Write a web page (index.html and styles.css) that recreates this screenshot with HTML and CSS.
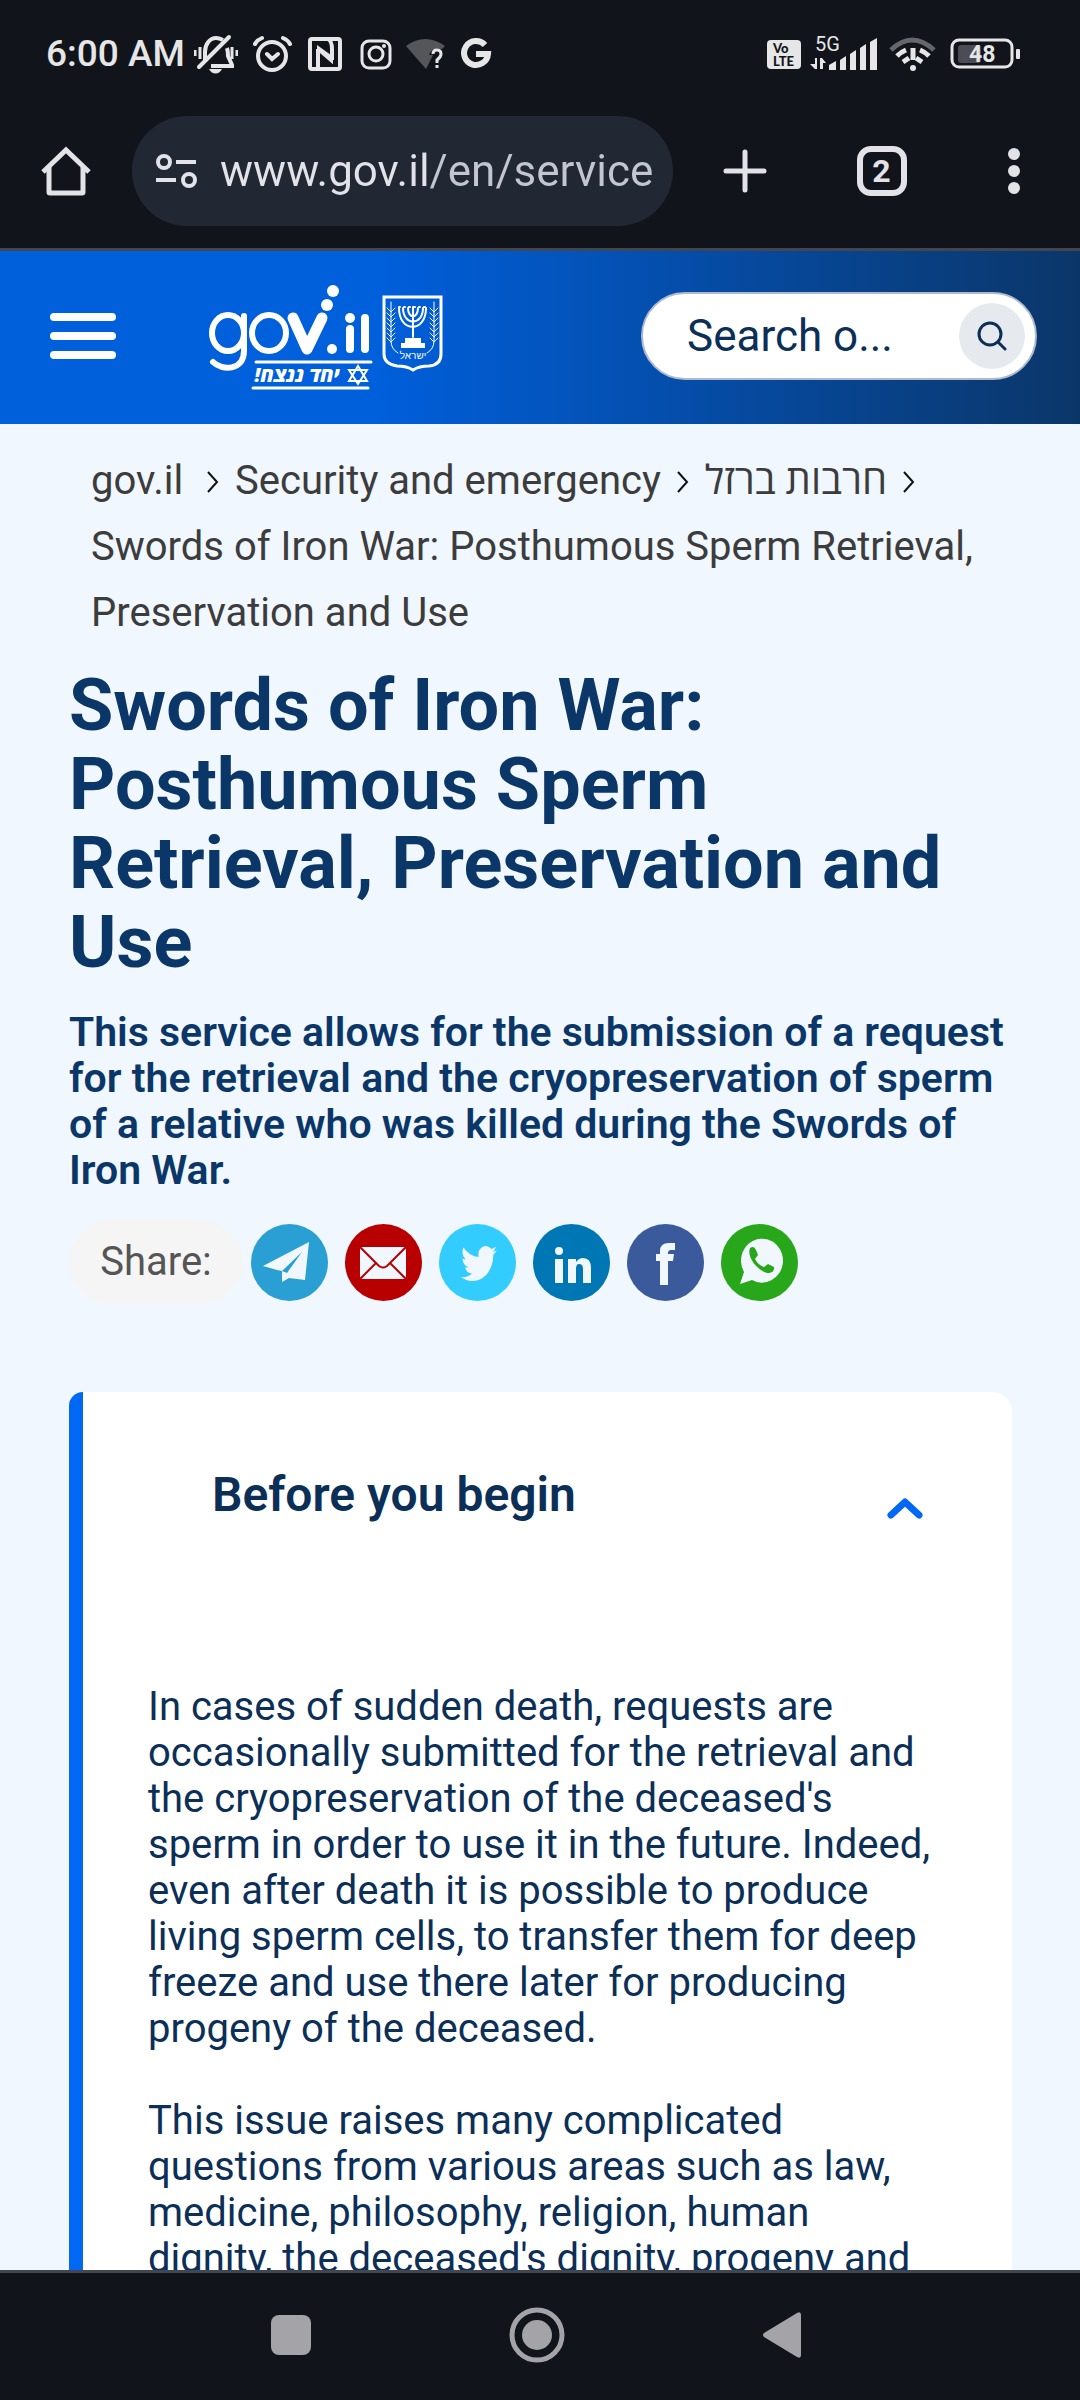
FILE: index.html
```html
<!DOCTYPE html>
<html lang="en">
<head>
  <meta charset="utf-8">
  <meta name="viewport" content="width=device-width, initial-scale=1.0">
  <title>Swords of Iron War: Posthumous Sperm Retrieval, Preservation and Use</title>
  <link rel="stylesheet" href="styles.css">
</head>
<body>

  <!-- Phone status bar -->
  <div class="status-bar">
    <div class="status-left">
      <span class="clock">6:00 AM</span>
      <svg width="44" height="40" viewBox="194 34 44 40" fill="none" stroke="#e6e6e6" stroke-width="4">
        <path d="M205 60V52c0-8 5-14 11-14 3 0 5 1 7 2M227 48c1 3 1 5 1 8l4 9v1h-21" />
        <path d="M199 67l30-30" stroke-linecap="round" />
        <path d="M195 50v6M200 47v12M232 47v12M237 50v6" stroke-width="3" />
        <path d="M209 69h13c-3 6-10 6-13 0z" fill="#e6e6e6" stroke="none" />
      </svg>
      <svg width="42" height="40" viewBox="252 34 42 40" fill="none" stroke="#e6e6e6" stroke-width="4" stroke-linecap="round">
        <circle cx="272" cy="56" r="14" />
        <path d="M255 44q2-4 7-6M290 44q-2-4-7-6M267 54l5 5 6-5" />
      </svg>
      <svg width="36" height="40" viewBox="308 34 36 40" fill="none" stroke="#e6e6e6" stroke-width="4">
        <rect x="310" y="39" width="30" height="30" rx="2" />
        <path d="M318 69V49M332 60V49q0-8-4-10" />
        <path d="M318 50v-3l14 10v5z" fill="#e6e6e6" stroke-width="2" />
      </svg>
      <svg width="34" height="40" viewBox="358 34 34 40" fill="none" stroke="#e6e6e6" stroke-width="3">
        <rect x="362" y="41" width="28" height="27" rx="7" />
        <circle cx="376" cy="54" r="7" />
        <circle cx="384" cy="46" r="2" fill="#e6e6e6" stroke="none" />
      </svg>
      <svg width="40" height="40" viewBox="406 34 40 40">
        <path d="M406 46q19-14 39 0l-3 3q-10-2-13 6h4l-7 14z" fill="#55565a" />
        <path d="M433 54q0-4 4-4t4 4q0 3-4 6v3M437 65v3" fill="none" stroke="#e6e6e6" stroke-width="3" />
      </svg>
      <svg width="32" height="40" viewBox="460 34 32 40" fill="none" stroke="#e6e6e6" stroke-width="6">
        <path d="M485 45a12 12 0 1 0 3 9h-12" />
      </svg>
    </div>
    <div class="status-right">
      <svg width="36" height="40" viewBox="766 34 36 40">
        <rect x="767" y="40" width="34" height="29" rx="4" fill="#e6e6e6" />
        <text class="volte"><tspan x="773" y="53">Vo</tspan><tspan x="773" y="66">LTE</tspan></text>
      </svg>
      <svg width="70" height="48" viewBox="810 30 70 48" fill="#e6e6e6">
        <text class="network" x="815" y="51">5G</text>
        <path d="M815 58h2v11h-2l-5-5h5zM820 69V58h2l4 5h-3v6z" />
        <path d="M829 70v-5l7-4v9zM840 70V60l6-4v14zM850 70V54l6-4v20zM860 70V48l6-4v26zM870 70V42l7-4v32z" />
      </svg>
      <svg width="50" height="40" viewBox="888 34 50 40" fill="none" stroke="#e6e6e6" stroke-width="5">
        <path d="M891 50q21-20 43 0" stroke="#66676b" />
        <path d="M897 56q4-4 9-6M929 56q-4-4-9-6M903 62l6-4M922 62l-6-4" />
        <path d="M913 48v12" />
        <circle cx="913" cy="68" r="3" fill="#e6e6e6" stroke="none" />
      </svg>
      <svg width="76" height="40" viewBox="946 34 76 40">
        <rect x="952" y="40" width="60" height="27" rx="7" fill="none" stroke="#e6e6e6" stroke-width="3" />
        <rect x="958" y="45" width="23" height="18" rx="3" fill="#4c4d54" />
        <rect x="1016" y="49" width="4" height="10" rx="1" fill="#e6e6e6" />
        <text class="charge" x="969" y="62">48</text>
      </svg>
    </div>
  </div>

  <!-- Browser toolbar -->
  <div class="toolbar">
    <button class="tool" type="button" aria-label="Home">
      <svg width="50" height="50" viewBox="0 0 50 50" fill="none" stroke="#e3e2e9" stroke-width="5">
        <path d="M2 26L25 4l23 22" />
        <path d="M8 21v25q0 1 1 1h32q1 0 1-1V21" />
      </svg>
    </button>
    <div class="address">
      <svg width="42" height="36" viewBox="0 0 42 36" fill="none" stroke="#e3e2e9" stroke-width="4">
        <circle cx="9" cy="9" r="6" />
        <circle cx="34" cy="27" r="6" />
        <path d="M21 9h20M1 27h20" />
      </svg>
      <input type="text" aria-label="Address" value="www.gov.il/en/service">
    </div>
    <div class="tools">
      <button class="tool" type="button" aria-label="New tab">
        <svg width="44" height="44" viewBox="0 0 44 44" fill="none" stroke="#e3e2e9" stroke-width="5" stroke-linecap="round">
          <path d="M22 3v38M3 22h38" />
        </svg>
      </button>
      <button class="tool tabs" type="button" aria-label="Open tabs">2</button>
      <button class="tool" type="button" aria-label="Menu">
        <svg width="12" height="46" viewBox="0 0 12 46" fill="#e3e2e9">
          <circle cx="6" cy="6" r="6" /><circle cx="6" cy="23" r="6" /><circle cx="6" cy="40" r="6" />
        </svg>
      </button>
    </div>
  </div>

  <!-- Site header -->
  <header class="header">
    <button class="hamburger" type="button" aria-label="Menu">
      <span></span><span></span><span></span>
    </button>
    <a class="logo" href="#" aria-label="gov.il">
      <svg width="236" height="112" viewBox="208 281 236 112" fill="none" stroke="#fff" stroke-linecap="round">
        <g stroke-width="6">
          <ellipse cx="228" cy="332" rx="16" ry="18" />
          <path d="M244 315v35c0 20-22 20-31 11" />
          <ellipse cx="269" cy="332" rx="17" ry="18" />
        </g>
        <path d="M293 317l14 31 15-31" stroke-width="11" stroke-linejoin="round" />
        <g fill="#fff" stroke="none">
          <circle cx="327" cy="304" r="6" /><circle cx="333" cy="290" r="6" />
          <circle cx="332" cy="348" r="5" /><circle cx="350" cy="317" r="5" />
        </g>
        <path d="M350 328v20M365 317v31" stroke-width="8" />
        <path d="M256 361h115M253 387h115" stroke-width="3" />
        <path d="M358 365l9 15h-18zM358 383l-9-14h18z" stroke-width="2" />
        <text class="slogan" x="297" y="381">יחד ננצח!</text>
        <!-- State emblem -->
        <path d="M384 296h57v57q0 11-12 12-10 0-16 4-6-4-16-4-13-2-13-12z" stroke-width="3" />
        <g stroke-width="2">
          <path d="M399 307c0 25 27 25 27 0M403 307c0 18 20 18 20 0M408 307c0 11 10 11 10 0M413 306v30" />
          <path d="M399 306h27" stroke-dasharray="1 4" />
        </g>
        <g stroke-width="1">
          <path d="M391 301v39q0 8 7 12M434 301v39q0 8-7 12" />
          <path d="M387 307l4 4 4-4M387 312l4 4 4-4M387 317l4 4 4-4M387 322l4 4 4-4M387 327l4 4 4-4M387 332l4 4 4-4M387 337l4 4 4-4M430 307l4 4 4-4M430 312l4 4 4-4M430 317l4 4 4-4M430 322l4 4 4-4M430 327l4 4 4-4M430 332l4 4 4-4M430 337l4 4 4-4" />
        </g>
        <path d="M405 337h16v5h4v5h-24v-5h4z" fill="#fff" stroke="none" />
        <text class="emblem-name" x="413" y="358">ישראל</text>
      </svg>
    </a>
    <form class="search">
      <input type="text" aria-label="Search" placeholder="Search o...">
      <button type="button" aria-label="Search">
        <svg width="30" height="30" viewBox="0 0 30 30" fill="none" stroke="#0c2f57" stroke-width="3" stroke-linecap="round">
          <circle cx="13" cy="13" r="11" />
          <path d="M21 21l7 7" />
        </svg>
      </button>
    </form>
  </header>

  <main class="page">
    <nav class="breadcrumb" aria-label="Breadcrumb">
      <a class="home" href="#">gov.il</a>
      <svg width="14" height="24" viewBox="0 0 14 24"><path d="M2 2l9 10-9 10" /></svg>
      <a href="#">Security and emergency</a>
      <svg width="14" height="24" viewBox="0 0 14 24"><path d="M2 2l9 10-9 10" /></svg>
      <a href="#" lang="he">חרבות ברזל</a>
      <svg width="14" height="24" viewBox="0 0 14 24"><path d="M2 2l9 10-9 10" /></svg>
      <span>Swords of Iron War: Posthumous Sperm Retrieval, Preservation and Use</span>
    </nav>

    <h1>Swords of Iron War: Posthumous Sperm Retrieval, Preservation and Use</h1>
    <p class="intro">This service allows for the submission of a request for the retrieval and the cryopreservation of sperm of a relative who was killed during the Swords of Iron War.</p>

    <div class="share">
      <span class="share-label">Share:</span>
      <a class="telegram" href="#" aria-label="Telegram">
        <svg viewBox="0 0 77 77"><path d="M12 42l46-24-4 38-16-2-7 4V47l-5-1zM31 47l20-19-15 21z" fill="#f0f7ff" fill-rule="evenodd" /></svg>
      </a>
      <a class="mail" href="#" aria-label="Email">
        <svg viewBox="0 0 77 77"><path d="M15 23h46v32H15z" fill="#f0f7ff" /><path d="M15 23l19 19q4 3 8 0l19-19M15 55l16-16M61 55L45 39" fill="none" stroke="#b80000" stroke-width="2" /></svg>
      </a>
      <a class="twitter" href="#" aria-label="Twitter">
        <svg viewBox="0 0 77 77"><path transform="translate(22 18) scale(1.5 1.8)" d="M23.9 4.6a10 10 0 0 1-2.8.8 4.9 4.9 0 0 0 2.2-2.7c-1 .6-2 1-3.1 1.2a4.9 4.9 0 0 0-8.4 4.5A14 14 0 0 1 1.7 3.1a4.9 4.9 0 0 0 1.5 6.6 4.9 4.9 0 0 1-2.2-.6 4.9 4.9 0 0 0 3.9 4.9 5 5 0 0 1-2.2.1 4.9 4.9 0 0 0 4.6 3.4A9.9 9.9 0 0 1 0 19.5a14 14 0 0 0 7.5 2.2c9.1 0 14.3-7.7 14-14.6a10 10 0 0 0 2.4-2.5z" fill="#f0f7ff" /></svg>
      </a>
      <a class="linkedin" href="#" aria-label="LinkedIn">
        <svg viewBox="0 0 77 77"><path d="M22 35h8v24h-8zM35 35h8v3q3-4 7-4 8 0 8 10v15h-8V45q0-5-4-5-3 0-3 5v14h-8z" fill="#f0f7ff" /><circle cx="26" cy="27" r="4" fill="#f0f7ff" /></svg>
      </a>
      <a class="facebook" href="#" aria-label="Facebook">
        <svg viewBox="0 0 77 77"><path d="M33 61V37h-4v-7h4v-3q0-8 9-8h6v7h-4q-3 0-3 3v1h6l-1 7h-5v24z" fill="#f0f7ff" /></svg>
      </a>
      <a class="whatsapp" href="#" aria-label="WhatsApp">
        <svg viewBox="0 0 77 77"><path d="M19 60l4-12a21 22 0 1 1 8 8z" fill="#f0f7ff" /><path d="M29 24q4-3 6 2l2 5-3 4q3 6 9 8l4-3 6 3q1 5-5 6c-9 0-23-15-19-25z" fill="#29a71a" /></svg>
      </a>
    </div>

    <section class="card">
      <div class="card-head">
        <h2>Before you begin</h2>
        <button type="button" aria-label="Collapse" aria-expanded="true">
          <svg width="38" height="22" viewBox="0 0 38 22" fill="none" stroke="#0068f5" stroke-width="7" stroke-linecap="round" stroke-linejoin="round">
            <path d="M5 17L19 4l14 13" />
          </svg>
        </button>
      </div>
      <p>In cases of sudden death, requests are occasionally submitted for the retrieval and the cryopreservation of the deceased's sperm in order to use it in the future. Indeed, even after death it is possible to produce living sperm cells, to transfer them for deep freeze and use there later for producing progeny of the deceased.</p>
      <p>This issue raises many complicated questions from various areas such as law, medicine, philosophy, religion, human dignity, the deceased's dignity, progeny and</p>
    </section>
  </main>

  <!-- Phone navigation -->
  <div class="nav-bar">
    <button type="button" aria-label="Recent apps">
      <svg width="56" height="56" viewBox="0 0 56 56" fill="#a3a3a8"><rect x="8" y="8" width="40" height="40" rx="8" /></svg>
    </button>
    <button type="button" aria-label="Home">
      <svg width="56" height="56" viewBox="0 0 56 56"><circle cx="28" cy="28" r="25" fill="none" stroke="#a3a3a8" stroke-width="5" /><circle cx="28" cy="28" r="15" fill="#a3a3a8" /></svg>
    </button>
    <button type="button" aria-label="Back">
      <svg width="56" height="56" viewBox="0 0 56 56" fill="#a3a3a8"><path d="M9 26q-2 2 0 4l33 20q4 2 4-2V8q0-4-4-2z" /></svg>
    </button>
  </div>

</body>
</html>
```
FILE: styles.css
```css
* {
  box-sizing: border-box;
}

body {
  margin: 0;
  height: 100vh;
  display: flex;
  flex-direction: column;
  background: #f0f7ff;
  color: #0c2f57;
  font-family: Roboto, "Open Sans", "Liberation Sans", sans-serif;
  font-size: 40px;
  line-height: 46px;
}

button {
  margin: 0;
  padding: 0;
  border: 0;
  background: none;
  font: inherit;
  cursor: pointer;
}
input {
  min-width: 0;
  padding: 0;
  border: 0;
  background: none;
  font: inherit;
  outline: none;
}
svg {
  display: block;
  flex: none;
}
a {
  color: inherit;
  text-decoration: none;
}

/* Status bar */
.status-bar {
  flex: none;
  display: flex;
  justify-content: space-between;
  height: 108px;
  align-items: center;
  padding: 0 58px 0 46px;
  background: #11141b;
  color: #e6e6e6;
}
.status-left,
.status-right {
  display: flex;
  align-items: center;
}
.status-left {
  gap: 14px;
}
.status-right {
  gap: 8px;
}
.clock {
  width: 134px;
  font-size: 37px;
  font-weight: 500;
  white-space: nowrap;
}
.volte {
  font: 900 13px Lato, sans-serif;
  fill: #11141b;
}
.network {
  font: 400 20px Roboto, sans-serif;
}
.charge {
  font: 700 23px Roboto, sans-serif;
  fill: #e6e6e6;
}

/* Browser toolbar */
.toolbar {
  flex: none;
  display: flex;
  align-items: center;
  height: 143px;
  padding: 0 60px 14px 41px;
  border-bottom: 3px solid #44464f;
  background: #11141b;
  color: #e3e2e9;
}
.address {
  flex: 1;
  min-width: 0;
  display: flex;
  align-items: center;
  gap: 23px;
  height: 110px;
  margin: 0 50px 0 41px;
  padding: 0 20px 0 23px;
  border-radius: 55px;
  background: #222734;
}
/* host name is brighter than the path */
.address input {
  flex: 1;
  font-size: 44px;
  line-height: 60px;
  color: transparent;
  background: linear-gradient(90deg, #e3e2e9 210px, #c3c5d3 210px);
  -webkit-background-clip: text;
  background-clip: text;
}
.tools {
  flex: none;
  display: flex;
  align-items: center;
  justify-content: space-between;
  width: 297px;
}
.tabs {
  width: 50px;
  height: 50px;
  margin-right: 12px;
  border: 6px solid #e3e2e9;
  border-radius: 14px;
  color: #e3e2e9;
  font-size: 32px;
  font-weight: 700;
  line-height: 38px;
}

/* Site header */
.header {
  flex: none;
  display: flex;
  align-items: center;
  height: 173px;
  padding: 0 43px 3px 50px;
  background: linear-gradient(90deg, #005fdb 35%, #0b3668);
}
.hamburger {
  display: flex;
  flex-direction: column;
  gap: 11px;
  width: 66px;
}
.hamburger span {
  height: 8px;
  border-radius: 4px;
  background: #fff;
}
.logo {
  margin: 3px auto 0 92px;
}
.slogan {
  font: italic 800 20px "Open Sans", "Liberation Sans", sans-serif;
  fill: #fff;
  stroke: none;
  text-anchor: middle;
  direction: rtl;
}
.emblem-name {
  font: 400 10px "Liberation Sans", sans-serif;
  fill: #fff;
  stroke: none;
  text-anchor: middle;
}
.search {
  display: flex;
  align-items: center;
  width: 396px;
  height: 88px;
  padding: 0 10px 0 44px;
  border: 2px solid #aebacb;
  border-radius: 44px;
  background: #fff;
}
.search input {
  flex: 1;
  color: #0c2f57;
  font-size: 44px;
}
.search input::placeholder {
  color: #0c2f57;
  opacity: 1;
}
.search button {
  display: flex;
  align-items: center;
  justify-content: center;
  width: 66px;
  height: 66px;
  border-radius: 50%;
  background: #e6eaef;
}

/* Page */
.page {
  flex: 1;
  min-height: 0;
  overflow: hidden;
  padding: 24px 68px 0 69px;
}
.breadcrumb {
  padding: 0 22px;
  color: #3c3c3c;
  font-size: 40px;
  line-height: 66px;
}
.breadcrumb svg {
  display: inline-block;
  margin: 0 5px;
  fill: none;
  stroke: #111;
  stroke-width: 2;
}
.breadcrumb .home {
  margin-right: 8px;
}
h1 {
  margin: 20px 0 0;
  color: #0b3668;
  font-size: 72px;
  font-weight: 700;
  line-height: 79px;
}
.intro {
  margin: 27px 0 0;
  color: #0b3668;
  font-size: 41px;
  font-weight: 600;
}
.share {
  display: flex;
  align-items: center;
  gap: 17px;
  margin-top: 27px;
}
.share-label {
  width: 174px;
  margin-right: -9px;
  border-radius: 42px;
  background: #f5f5f5;
  color: #555;
  line-height: 84px;
  text-align: center;
}
.share a {
  width: 77px;
  height: 77px;
  border-radius: 50%;
}
.telegram { background: #2a9fd4; }
.mail { background: #b80000; }
.twitter { background: #33ccff; }
.linkedin { background: #0077b5; }
.facebook { background: #3b5a9b; }
.whatsapp { background: #29a71a; }

/* Collapsible card */
.card {
  margin-top: 88px;
  padding: 78px 76px 64px 65px;
  border-left: 14px solid #0068f5;
  border-radius: 14px 20px 20px 14px;
  background: #fff;
}
.card-head {
  display: flex;
  align-items: center;
  justify-content: space-between;
  margin-bottom: 164px;
  padding: 0 12px 0 64px;
}
.card-head h2 {
  margin: 0;
  font-size: 48px;
  font-weight: 600;
  line-height: 46px;
}
.card-head button {
  padding-top: 28px;
}
.card p {
  margin: 0 0 46px;
}

/* Phone navigation */
.nav-bar {
  flex: none;
  display: flex;
  align-items: center;
  justify-content: center;
  gap: 190px;
  height: 130px;
  padding: 0 6px 3px 0;
  border-top: 3px solid #44464f;
  background: #11141b;
}
```
